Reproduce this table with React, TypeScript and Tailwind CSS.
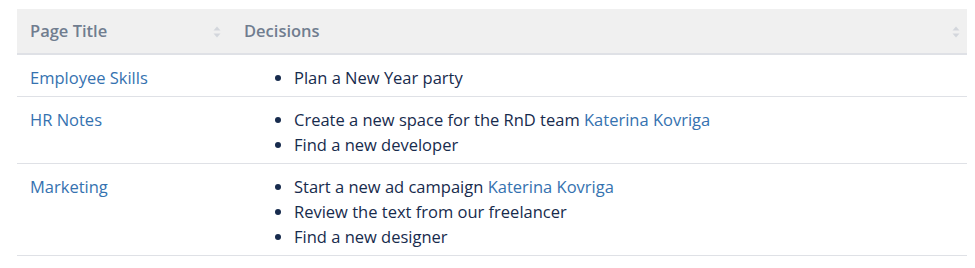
import React from "react";

type Item = { text: string; mention?: string };
type Row = { title: string; items: Item[] };

const rows: Row[] = [
  { title: "Employee Skills", items: [{ text: "Plan a New Year party" }] },
  {
    title: "HR Notes",
    items: [
      { text: "Create a new space for the RnD team", mention: "Katerina Kovriga" },
      { text: "Find a new developer" },
    ],
  },
  {
    title: "Marketing",
    items: [
      { text: "Start a new ad campaign", mention: "Katerina Kovriga" },
      { text: "Review the text from our freelancer" },
      { text: "Find a new designer" },
    ],
  },
];

function SortIcon() {
  return (
    <svg width="8" height="12" viewBox="0 0 8 12" className="shrink-0">
      <path d="M4 0.5 L7.5 4.5 H0.5 Z" fill="#d3d6dc" />
      <path d="M4 11.5 L7.5 7.5 H0.5 Z" fill="#d3d6dc" />
    </svg>
  );
}

export default function App() {
  return (
    <div
      className="bg-white w-[975px] h-[268px] pt-[9px] pl-[17px] text-[16.5px] text-[#172b4d]"
      style={{ fontFamily: '"Open Sans", "Noto Sans", Arial, sans-serif' }}
    >
      <table className="w-[950px] border-collapse">
        <thead>
          <tr className="bg-[#f0f0f0] border-b-2 border-[#dfe1e6]">
            <th className="w-[214px] h-[45px] pl-[13px] pr-[10px] text-left font-semibold text-[#707d8f]">
              <div className="flex items-center justify-between pt-[1px]">
                <span>Page Title</span>
                <SortIcon />
              </div>
            </th>
            <th className="h-[45px] pl-[13px] pr-[7px] text-left font-semibold text-[#707d8f]">
              <div className="flex items-center justify-between pt-[1px]">
                <span>Decisions</span>
                <SortIcon />
              </div>
            </th>
          </tr>
        </thead>
        <tbody>
          {rows.map((row) => (
            <tr key={row.title} className="border-b border-[#dfe1e6] align-top">
              <td className="pl-[13px] pt-[10px] pb-[6px] leading-[25px] text-[#3572b0]">
                {row.title}
              </td>
              <td className="pl-[13px] pt-[10px] pb-[6px] leading-[25px]">
                <ul className="list-disc pl-[50px] marker:text-[#172b4d]">
                  {row.items.map((item) => (
                    <li key={item.text}>
                      {item.text}
                      {item.mention && (
                        <span className="text-[#3572b0]"> {item.mention}</span>
                      )}
                    </li>
                  ))}
                </ul>
              </td>
            </tr>
          ))}
        </tbody>
      </table>
    </div>
  );
}
